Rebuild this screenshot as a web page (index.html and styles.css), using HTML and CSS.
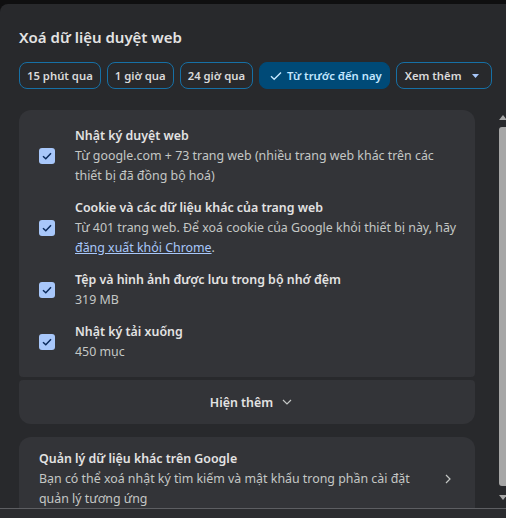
FILE: index.html
```html
<!DOCTYPE html>
<html lang="vi">
<head>
<meta charset="utf-8">
<link rel="stylesheet" href="styles.css">
</head>
<body>
<div class="topbar"></div>
<div class="dialog">
  <h1 class="title">Xoá dữ liệu duyệt web</h1>
  <div class="chips">
    <span class="chip">15 phút qua</span>
    <span class="chip">1 giờ qua</span>
    <span class="chip">24 giờ qua</span>
    <span class="chip chip-selected"><svg class="chip-check" width="12" height="10" viewBox="0 0 12 10"><path d="M1 5.2 L4.2 8.3 L11 1.5" fill="none" stroke="#c2e7ff" stroke-width="1.4"/></svg>Từ trước đến nay</span>
    <span class="chip chip-menu">Xem thêm<svg class="caret" width="7" height="4" viewBox="0 0 7 4"><path d="M0 0 H7 L3.5 4 Z" fill="#a8c7fa"/></svg></span>
  </div>
  <div class="body">
    <div class="scroller">
      <div class="group">
        <div class="card card-top">
          <div class="item">
            <span class="checkbox"><svg width="10" height="8" viewBox="0 0 10 8"><path d="M1 4.2 L3.8 6.8 L9 1.2" fill="none" stroke="#0a2a5c" stroke-width="1.5"/></svg></span>
            <div class="item-text">
              <div class="item-title">Nhật ký duyệt web</div>
              <div class="item-sub">Từ google.com + 73 trang web (nhiều trang web khác trên các thiết bị đã đồng bộ hoá)</div>
            </div>
          </div>
          <div class="item">
            <span class="checkbox"><svg width="10" height="8" viewBox="0 0 10 8"><path d="M1 4.2 L3.8 6.8 L9 1.2" fill="none" stroke="#0a2a5c" stroke-width="1.5"/></svg></span>
            <div class="item-text">
              <div class="item-title">Cookie và các dữ liệu khác của trang web</div>
              <div class="item-sub">Từ 401 trang web. Để xoá cookie của Google khỏi thiết bị này, hãy <a class="link" href="#">đăng xuất khỏi Chrome</a>.</div>
            </div>
          </div>
          <div class="item">
            <span class="checkbox"><svg width="10" height="8" viewBox="0 0 10 8"><path d="M1 4.2 L3.8 6.8 L9 1.2" fill="none" stroke="#0a2a5c" stroke-width="1.5"/></svg></span>
            <div class="item-text">
              <div class="item-title">Tệp và hình ảnh được lưu trong bộ nhớ đệm</div>
              <div class="item-sub">319 MB</div>
            </div>
          </div>
          <div class="item">
            <span class="checkbox"><svg width="10" height="8" viewBox="0 0 10 8"><path d="M1 4.2 L3.8 6.8 L9 1.2" fill="none" stroke="#0a2a5c" stroke-width="1.5"/></svg></span>
            <div class="item-text">
              <div class="item-title">Nhật ký tải xuống</div>
              <div class="item-sub">450 mục</div>
            </div>
          </div>
        </div>
        <div class="card card-bottom more">
          <span>Hiện thêm</span>
          <svg class="more-chev" width="10" height="6" viewBox="0 0 10 6"><path d="M1 1 L5 5 L9 1" fill="none" stroke="#c4c7c5" stroke-width="1.2"/></svg>
        </div>
      </div>
      <div class="card link-card">
        <div class="link-text">
          <div class="item-title">Quản lý dữ liệu khác trên Google</div>
          <div class="item-sub">Bạn có thể xoá nhật ký tìm kiếm và mật khẩu trong phần cài đặt quản lý tương ứng</div>
        </div>
        <svg class="link-chev" width="6" height="10" viewBox="0 0 6 10"><path d="M1 1 L5 5 L1 9" fill="none" stroke="#c4c7c5" stroke-width="1.2"/></svg>
      </div>
    </div>
    <div class="scrollbar">
      <svg class="sb-arrow" width="8" height="5" viewBox="0 0 8 5"><path d="M0 5 L4 0 L8 5 Z" fill="#a6a6a6"/></svg>
      <div class="sb-thumb"></div>
      <svg class="sb-arrow" width="8" height="5" viewBox="0 0 8 5"><path d="M0 0 L8 0 L4 5 Z" fill="#a6a6a6"/></svg>
    </div>
  </div>
  <div class="footer"></div>
</div>
</body>
</html>
```

FILE: styles.css
```css
* { box-sizing: border-box; }
html, body { margin: 0; padding: 0; }
body {
  width: 506px;
  height: 518px;
  overflow: hidden;
  background: #0f0f10;
  font-family: "Noto Sans", "Liberation Sans", sans-serif;
  color: #e3e3e3;
}
.topbar { height: 4px; background: #0f0f10; }
.dialog {
  height: 514px;
  background: #28292c;
  border-radius: 8px 0 0 0;
  display: flex;
  flex-direction: column;
  overflow: hidden;
}
.title {
  margin: 21px 0 0 19px;
  font-size: 15px;
  line-height: 24px;
  font-weight: 600;
  color: #e3e3e3;
}
.chips {
  display: flex;
  gap: 6px;
  margin: 13px 0 0 19px;
}
.chip {
  display: inline-flex;
  align-items: center;
  height: 27px;
  padding: 0 7px;
  border: 1px solid #1670a6;
  border-radius: 8px;
  font-size: 11.3px;
  font-weight: 600;
  color: #dadada;
  white-space: nowrap;
}
.chip-selected {
  background: #004a77;
  border-color: #004a77;
  color: #c2e7ff;
  padding: 0 7px 0 10px;
}
.chip-check { margin-right: 5px; }
.chip-menu { padding: 0 12px 0 8px; }
.caret { margin-left: 10px; }
.body {
  margin-top: 21px;
  flex: 1;
  display: flex;
  min-height: 0;
}
.scroller {
  flex: 1;
  padding: 0 23px 0 19px;
  overflow: hidden;
}
.group { display: flex; flex-direction: column; gap: 3px; }
.card { background: #333438; }
.card-top {
  border-radius: 12px 12px 4px 4px;
  padding: 16px 14px 15px 20px;
  display: flex;
  flex-direction: column;
  gap: 12px;
}
.card-bottom { border-radius: 4px 4px 12px 12px; }
.item { display: flex; align-items: center; gap: 20px; }
.checkbox {
  flex: none;
  width: 16px;
  height: 16px;
  border-radius: 3px;
  background: #a8c7fa;
  display: flex;
  align-items: center;
  justify-content: center;
}
.item-title {
  font-size: 12.4px;
  line-height: 20px;
  font-weight: 600;
  color: #e3e3e3;
}
.item-sub {
  font-size: 12.4px;
  line-height: 20px;
  color: #c4c7c5;
}
.link { color: #a8c7fa; text-decoration: underline; }
.more {
  height: 44px;
  display: flex;
  align-items: center;
  justify-content: center;
  gap: 9px;
  font-size: 12.4px;
  font-weight: 600;
  color: #e3e3e3;
  padding-left: 8px;
}
.link-card {
  margin-top: 13px;
  border-radius: 12px;
  padding: 12px 24px 14px 20px;
  display: flex;
  align-items: center;
  gap: 30px;
}
.link-text { flex: 1; }
.link-chev { flex: none; }
.scrollbar {
  width: 8px;
  display: flex;
  flex-direction: column;
  align-items: center;
  padding: 5px 0 8px 1px;
  gap: 5px;
}
.sb-arrow { flex: none; }
.sb-thumb {
  flex: 1;
  width: 7px;
  background: #a6a6a6;
  border-radius: 3px 0 0 3px;
  margin: 2px 0 4px 0;
}
.footer {
  height: 10px;
  border-top: 1px solid #5d5e62;
  background: #2b2c2f;
}
```
